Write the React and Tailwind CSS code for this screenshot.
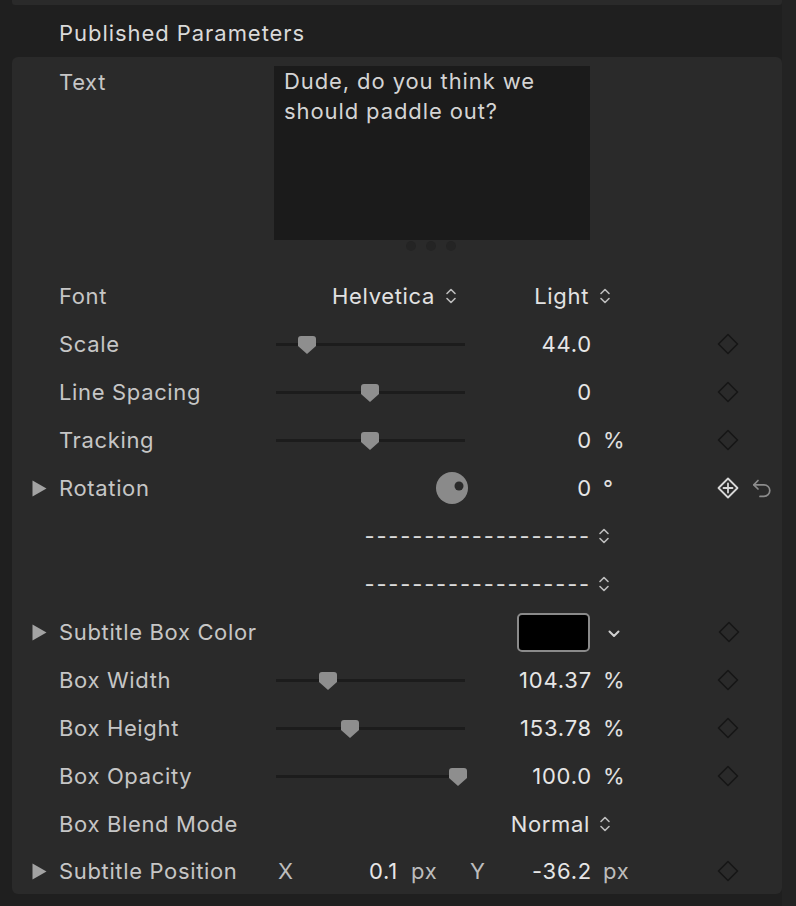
import React from "react";

const font = { fontFamily: "Inter, 'Noto Sans', 'Liberation Sans', sans-serif" };

const Chevrons = () => (
  <svg width="12" height="20" viewBox="0 0 12 20" className="shrink-0">
    <path d="M2 7.5 L6 3.5 L10 7.5 M2 12.5 L6 16.5 L10 12.5" stroke="#bdbdbd" strokeWidth="1.6" fill="none" strokeLinecap="round" strokeLinejoin="round" />
  </svg>
);

const Diamond = () => (
  <svg width="22" height="22" viewBox="0 0 22 22" className="shrink-0">
    <path d="M11 1.5 L20.5 11 L11 20.5 L1.5 11 Z" stroke="#161616" strokeWidth="1.6" fill="none" strokeLinejoin="round" />
  </svg>
);

const KeyDiamond = () => (
  <svg width="22" height="22" viewBox="0 0 22 22" className="shrink-0">
    <path d="M11 1.5 L20.5 11 L11 20.5 L1.5 11 Z" stroke="#d8d8d8" strokeWidth="1.8" fill="none" strokeLinejoin="round" />
    <path d="M11 6.5 V15.5 M6.5 11 H15.5" stroke="#d8d8d8" strokeWidth="1.8" strokeLinecap="round" />
  </svg>
);

const Undo = () => (
  <svg width="20" height="20" viewBox="0 0 20 20" className="shrink-0">
    <path d="M6 2.5 L1.8 6.8 L6 11" stroke="#8c8c8c" strokeWidth="1.7" fill="none" strokeLinecap="round" strokeLinejoin="round" />
    <path d="M2 6.8 H12 A5.8 5.8 0 0 1 12 18.4 H8" stroke="#8c8c8c" strokeWidth="1.7" fill="none" strokeLinecap="round" strokeLinejoin="round" />
  </svg>
);

const Triangle = () => (
  <svg width="15" height="17" viewBox="0 0 15 17">
    <path d="M0.5 0.5 L14.5 8.5 L0.5 16.5 Z" fill="#a3a3a3" />
  </svg>
);

const Slider = ({ pos }) => (
  <div className="relative w-[190px] h-[20px] shrink-0">
    <div className="absolute left-0 top-[9px] w-[189px] h-[3px] bg-[#1c1c1c]" />
    <svg width="18" height="18" viewBox="0 0 18 18" className="absolute top-[2px]" style={{ left: pos - 276 - 9 }}>
      <path d="M3 0 H15 Q18 0 18 3 V10 L9 18 L0 10 V3 Q0 0 3 0 Z" fill="#8e8e8e" />
    </svg>
  </div>
);

const Row = ({ triangle, label, children, h = "h-12" }) => (
  <div className={`flex items-center ${h}`}>
    <div className="w-[47px] shrink-0 pl-[20px] flex items-center">{triangle ? <Triangle /> : null}</div>
    <div className="w-[217px] shrink-0 text-[#c6c6c6] whitespace-nowrap">{label}</div>
    <div className="flex items-center">{children}</div>
  </div>
);

const Value = ({ v, unit }) => (
  <>
    <div className="w-[126px] shrink-0 text-right text-[#e6e6e6] tracking-[0.8px]">{v}</div>
    <div className="w-[48px] shrink-0 pl-[11px] text-[#e0e0e0]">{unit}</div>
  </>
);

const SliderRow = ({ label, pos, v, unit }) => (
  <Row label={label}>
    <Slider pos={pos} />
    <Value v={v} unit={unit} />
    <div className="w-[77px] shrink-0" />
    <Diamond />
  </Row>
);

const Dashes = () => (
  <div className="w-[322px] shrink-0 flex justify-end pr-[7px]">
    <span className="text-[#dcdcdc] tracking-[1.8px] leading-none">{"-------------------"}</span>
  </div>
);

export default function App() {
  return (
    <div className="w-[796px] h-[906px] bg-[#1f1f1f] flex text-[22px] tracking-[0.65px]" style={font}>
      <div className="w-[782px] shrink-0 pl-[12px] flex flex-col">
        <div className="h-[5px] bg-[#2a2a2a] rounded-b-[3px]" />
        <div className="h-[52px] pl-[47px] pt-[15px] leading-[26px] text-[#dadada] tracking-[0.95px]">Published Parameters</div>
        <div className="h-[837px] bg-[#2a2a2a] rounded-[6px] flex flex-col">
          <div className="h-[215px] flex">
            <div className="w-[47px] shrink-0" />
            <div className="w-[215px] shrink-0 pt-[10px] leading-[30px] text-[#c6c6c6]">Text</div>
            <div className="flex flex-col pt-[9px]">
              <div className="w-[316px] h-[174px] bg-[#1b1b1b] pl-[10px] leading-[30px] text-[#d4d4d4] tracking-[0.9px]">
                Dude, do you think we
                <br />
                should paddle out?
              </div>
              <div className="flex gap-[10px] mt-[1px] pl-[132px]">
                <div className="w-[10px] h-[10px] rounded-full bg-[#242424]" />
                <div className="w-[10px] h-[10px] rounded-full bg-[#242424]" />
                <div className="w-[10px] h-[10px] rounded-full bg-[#242424]" />
              </div>
            </div>
          </div>

          <Row label="Font">
            <div className="w-[190px] shrink-0 flex justify-end items-center gap-[10px] pr-[9px] text-[#e2e2e2]">
              <span>Helvetica</span>
              <Chevrons />
            </div>
            <div className="w-[146px] shrink-0 flex justify-end items-center gap-[10px] pr-[1px] text-[#e2e2e2]">
              <span>Light</span>
              <Chevrons />
            </div>
          </Row>
          <SliderRow label="Scale" pos={307} v="44.0" unit="" />
          <SliderRow label="Line Spacing" pos={370} v="0" unit="" />
          <SliderRow label="Tracking" pos={370} v="0" unit="%" />
          <Row triangle label="Rotation">
            <div className="w-[190px] h-[32px] shrink-0 pl-[160px]">
              <svg width="32" height="32" viewBox="0 0 32 32">
                <circle cx="16" cy="16" r="16" fill="#8a8a8a" />
                <circle cx="23" cy="14" r="4.5" fill="#2a2a2a" />
              </svg>
            </div>
            <Value v="0" unit="°" />
            <div className="w-[77px] shrink-0" />
            <KeyDiamond />
            <div className="w-[13px] shrink-0" />
            <Undo />
          </Row>
          <Row label="">
            <Dashes />
            <Chevrons />
          </Row>
          <Row label="">
            <Dashes />
            <Chevrons />
          </Row>
          <Row triangle label="Subtitle Box Color">
            <div className="w-[241px] shrink-0" />
            <div className="w-[73px] h-[39px] shrink-0 bg-black border-2 border-[#8a8a8a] rounded-[5px]" />
            <div className="w-[17px] shrink-0" />
            <svg width="14" height="10" viewBox="0 0 14 10" className="shrink-0 mt-[4px]">
              <path d="M2.5 2.5 L7 7 L11.5 2.5" stroke="#d0d0d0" strokeWidth="2" fill="none" strokeLinecap="round" strokeLinejoin="round" />
            </svg>
            <div className="w-[97px] shrink-0" />
            <Diamond />
          </Row>
          <SliderRow label="Box Width" pos={328} v="104.37" unit="%" />
          <SliderRow label="Box Height" pos={350} v="153.78" unit="%" />
          <SliderRow label="Box Opacity" pos={458} v="100.0" unit="%" />
          <Row label="Box Blend Mode">
            <div className="w-[336px] shrink-0 flex justify-end items-center gap-[9px] pr-[1px] text-[#e2e2e2]">
              <span>Normal</span>
              <Chevrons />
            </div>
          </Row>
          <Row triangle label="Subtitle Position" h="h-[46px]">
            <div className="w-[40px] shrink-0 pl-[2px] text-[#bdbdbd]">X</div>
            <div className="w-[82px] shrink-0 text-right text-[#e6e6e6] tracking-[0.8px]">0.1</div>
            <div className="w-[68px] shrink-0 pl-[13px] text-[#bdbdbd]">px</div>
            <div className="w-[40px] shrink-0 pl-[4px] text-[#bdbdbd]">Y</div>
            <div className="w-[86px] shrink-0 text-right text-[#e6e6e6] tracking-[0.8px]">-36.2</div>
            <div className="w-[48px] shrink-0 pl-[11px] text-[#bdbdbd]">px</div>
            <div className="w-[77px] shrink-0" />
            <Diamond />
          </Row>
        </div>
      </div>
      <div className="w-[14px] shrink-0 bg-[#232323]" />
    </div>
  );
}
